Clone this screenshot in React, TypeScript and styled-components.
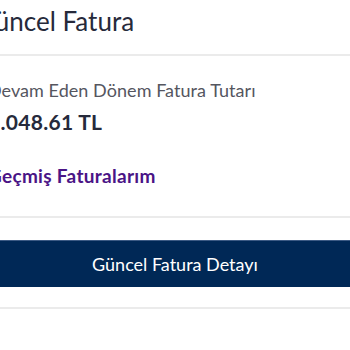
import React from "react";
import styled, { createGlobalStyle } from "styled-components";

const Global = createGlobalStyle`
  html, body { margin: 0; padding: 0; background: #ffffff; overflow: hidden; }
  body { font-family: "Lato", "Open Sans", sans-serif; }
`;

const Page = styled.div`
  width: 390px;
  margin-left: -20px;
  display: flex;
  flex-direction: column;
`;

const Header = styled.div`
  padding: 4px 0 0 0;
  height: 56px;
  border-bottom: 2px solid #ebebeb;
  box-sizing: border-box;
`;

const Title = styled.h1`
  margin: 0 0 0 -4px;
  font-size: 26px;
  font-weight: 400;
  color: #262a3b;
  line-height: 34px;
`;

const Body = styled.div`
  padding: 23px 0 0 8px;
  height: 162px;
  box-sizing: border-box;
  border-bottom: 2px solid #ebebeb;
  display: flex;
  flex-direction: column;
  align-items: flex-start;
`;

const Label = styled.div`
  font-size: 18px;
  letter-spacing: 0.05px;
  color: #55565f;
  line-height: 22px;
`;

const Amount = styled.div`
  margin-top: 8px;
  font-size: 21px;
  font-weight: 700;
  letter-spacing: 0.3px;
  color: #262a3b;
  line-height: 26px;
`;

const HistoryLink = styled.a`
  margin-top: 29px;
  font-size: 19px;
  font-weight: 700;
  letter-spacing: 0.3px;
  color: #4a1486;
  text-decoration: none;
  line-height: 24px;
`;

const Footer = styled.div`
  padding: 22px 0 20px;
  border-bottom: 2px solid #ebebeb;
`;

const PrimaryButton = styled.button`
  display: flex;
  align-items: center;
  justify-content: center;
  width: 100%;
  height: 47px;
  border: 0;
  border-top: 1px solid #3c5a84;
  background: #002856;
  color: #ffffff;
  font-family: inherit;
  font-size: 18px;
  padding: 0;
`;

export default function App() {
  return (
    <>
      <Global />
      <Page>
        <Header>
          <Title>Güncel Fatura</Title>
        </Header>
        <Body>
          <Label>Devam Eden Dönem Fatura Tutarı</Label>
          <Amount>1.048.61 TL</Amount>
          <HistoryLink href="#">Geçmiş Faturalarım</HistoryLink>
        </Body>
        <Footer>
          <PrimaryButton>Güncel Fatura Detayı</PrimaryButton>
        </Footer>
      </Page>
    </>
  );
}
